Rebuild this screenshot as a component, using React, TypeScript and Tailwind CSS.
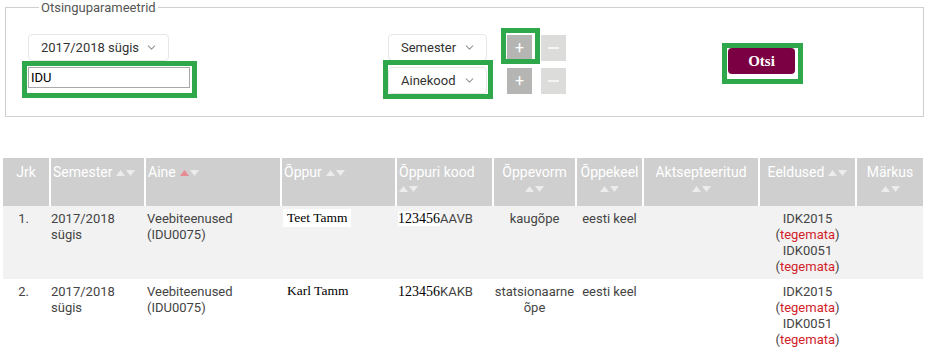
import React from 'react';
import { ChevronDown } from 'lucide-react';

const cols = [47, 95, 136, 115, 97, 83, 67, 116, 97, 67];

const SortArrows = ({ up = '#ececec' }: { up?: string }) => (
    <svg width="19" height="6" viewBox="0 0 19 6" className="inline-block align-middle">
        <polygon points="0,6 4.5,0 9,6" fill={up} />
        <polygon points="10,0 19,0 14.5,6" fill="#ececec" />
    </svg>
);

const headers = [
    { label: 'Jrk', align: 'text-center', arrows: 'none' },
    { label: 'Semester', align: 'text-left pl-[2px]', arrows: 'inline' },
    { label: 'Aine', align: 'text-left pl-[2px]', arrows: 'inline', red: true },
    { label: 'Õppur', align: 'text-left pl-[2px]', arrows: 'inline' },
    { label: 'Õppuri kood', align: 'text-left pl-[2px]', arrows: 'below' },
    { label: 'Õppevorm', align: 'text-center', arrows: 'below' },
    { label: 'Õppekeel', align: 'text-center', arrows: 'below' },
    { label: 'Aktsepteeritud', align: 'text-center', arrows: 'below' },
    { label: 'Eeldused', align: 'text-center', arrows: 'inline' },
    { label: 'Märkus', align: 'text-center', arrows: 'below' },
];

const rows = [
    { nr: '1.', name: 'Teet Tamm', code: 'AAVB', form: 'kaugõpe', bg: 'bg-[#f2f2f2]' },
    { nr: '2.', name: 'Karl Tamm', code: 'KAKB', form: 'statsionaarne õpe', bg: 'bg-white' },
];

const Select = ({ label, w }: { label: string; w: string }) => (
    <div className={`${w} h-[27px] flex items-center justify-between pl-[12px] pr-[10px] bg-white border border-[#e6e6e6] rounded-[4px] text-[13px] text-[#333]`}>
        <span>{label}</span>
        <ChevronDown className="w-[13px] h-[13px] text-[#9a9a9a]" strokeWidth={2.2} />
    </div>
);

const PlusMinus = () => (
    <>
        <div className="ml-[20px] w-[25px] h-[26px] bg-[#b5b5b4] flex items-center justify-center text-white text-[16px] leading-none">+</div>
        <div className="ml-[9px] w-[25px] h-[26px] bg-[#dcdcdb] flex items-center justify-center">
            <div className="w-[11px] h-[2px] bg-[#f4f4f4]" />
        </div>
    </>
);

const Mark = ({ cls }: { cls: string }) => (
    <div className={`absolute pointer-events-none border-[5px] border-[#2fa84c] ${cls}`} />
);

const App: React.FC = () => {
    return (
        <div className="relative w-[927px] h-[353px] overflow-hidden bg-white font-['Roboto',sans-serif]">
            <fieldset className="ml-[5px] w-[919px] h-[117px] border border-[#cfcfcf] pt-[19px] pl-[22px]">
                <legend className="ml-[11px] px-[2px] text-[13px] leading-[15px] text-[#555]">Otsinguparameetrid</legend>
                <div className="flex items-start">
                    <div className="flex flex-col">
                        <Select label="2017/2018 sügis" w="w-[141px]" />
                        <input
                            defaultValue="IDU"
                            className="mt-[6px] w-[162px] h-[21px] border border-[#a9a9a9] px-[2px] text-[13px] text-black outline-none"
                        />
                    </div>
                    <div className="ml-[198px] flex flex-col gap-[6px]">
                        <div className="flex items-center">
                            <Select label="Semester" w="w-[99px]" />
                            <PlusMinus />
                        </div>
                        <div className="flex items-center">
                            <Select label="Ainekood" w="w-[99px]" />
                            <PlusMinus />
                        </div>
                    </div>
                    <button className="ml-[162px] mt-[14px] w-[67px] h-[26px] rounded-[4px] bg-[#7a0043] text-white font-bold text-[15px] font-['Liberation_Serif',serif]">
                        Otsi
                    </button>
                </div>
            </fieldset>

            <table className="mt-[41px] ml-[3px] table-fixed border-collapse w-[920px]">
                <colgroup>
                    {cols.map((w, i) => <col key={i} style={{ width: w }} />)}
                </colgroup>
                <thead>
                    <tr className="h-[48px] bg-[#cfcfcf]">
                        {headers.map((h, i) => (
                            <th key={i} className={`align-top pt-[6px] font-normal text-white text-[14px] leading-[17px] border-l-2 border-white first:border-l-0 ${h.align}`}>
                                <span>{h.label}</span>
                                {h.arrows === 'inline' && <span className="ml-[4px]"><SortArrows up={h.red ? '#e88a93' : '#ececec'} /></span>}
                                {h.arrows === 'below' && <div className="mt-[4px] leading-[6px]"><SortArrows /></div>}
                            </th>
                        ))}
                    </tr>
                </thead>
                <tbody className="text-[13px] leading-[16px] text-[#444]">
                    {rows.map(r => (
                        <tr key={r.nr} className={r.bg}>
                            <td className="align-top pt-[5px] pb-[6px] text-center pr-[6px]">{r.nr}</td>
                            <td className="align-top pt-[5px] pl-[1px]">2017/2018<br />sügis</td>
                            <td className="align-top pt-[5px] pl-[2px]">Veebiteenused<br />(IDU0075)</td>
                            <td className="align-top pt-[3px] pl-[2px]">
                                <span className="inline-block bg-white px-[4px] py-[1px] font-['Liberation_Serif',serif] text-[13.5px] text-black">{r.name}</span>
                            </td>
                            <td className="align-top pt-[5px] pl-[2px]">
                                <span className="bg-white font-['Liberation_Serif',serif] text-[14px] text-black">123456</span>{r.code}
                            </td>
                            <td className="align-top pt-[5px] text-center">{r.form}</td>
                            <td className="align-top pt-[5px] text-center">eesti keel</td>
                            <td />
                            <td className="align-top pt-[5px] pb-[4px] text-center">
                                IDK2015<br />(<span className="text-[#d2232a]">tegemata</span>)<br />
                                IDK0051<br />(<span className="text-[#d2232a]">tegemata</span>)
                            </td>
                            <td />
                        </tr>
                    ))}
                </tbody>
            </table>

            <Mark cls="left-[22px] top-[61px] w-[175px] h-[37px]" />
            <Mark cls="left-[501px] top-[28px] w-[39px] h-[36px]" />
            <Mark cls="left-[383px] top-[60px] w-[110px] h-[39px]" />
            <Mark cls="left-[722px] top-[43px] w-[81px] h-[41px]" />
        </div>
    );
};

export default App;
